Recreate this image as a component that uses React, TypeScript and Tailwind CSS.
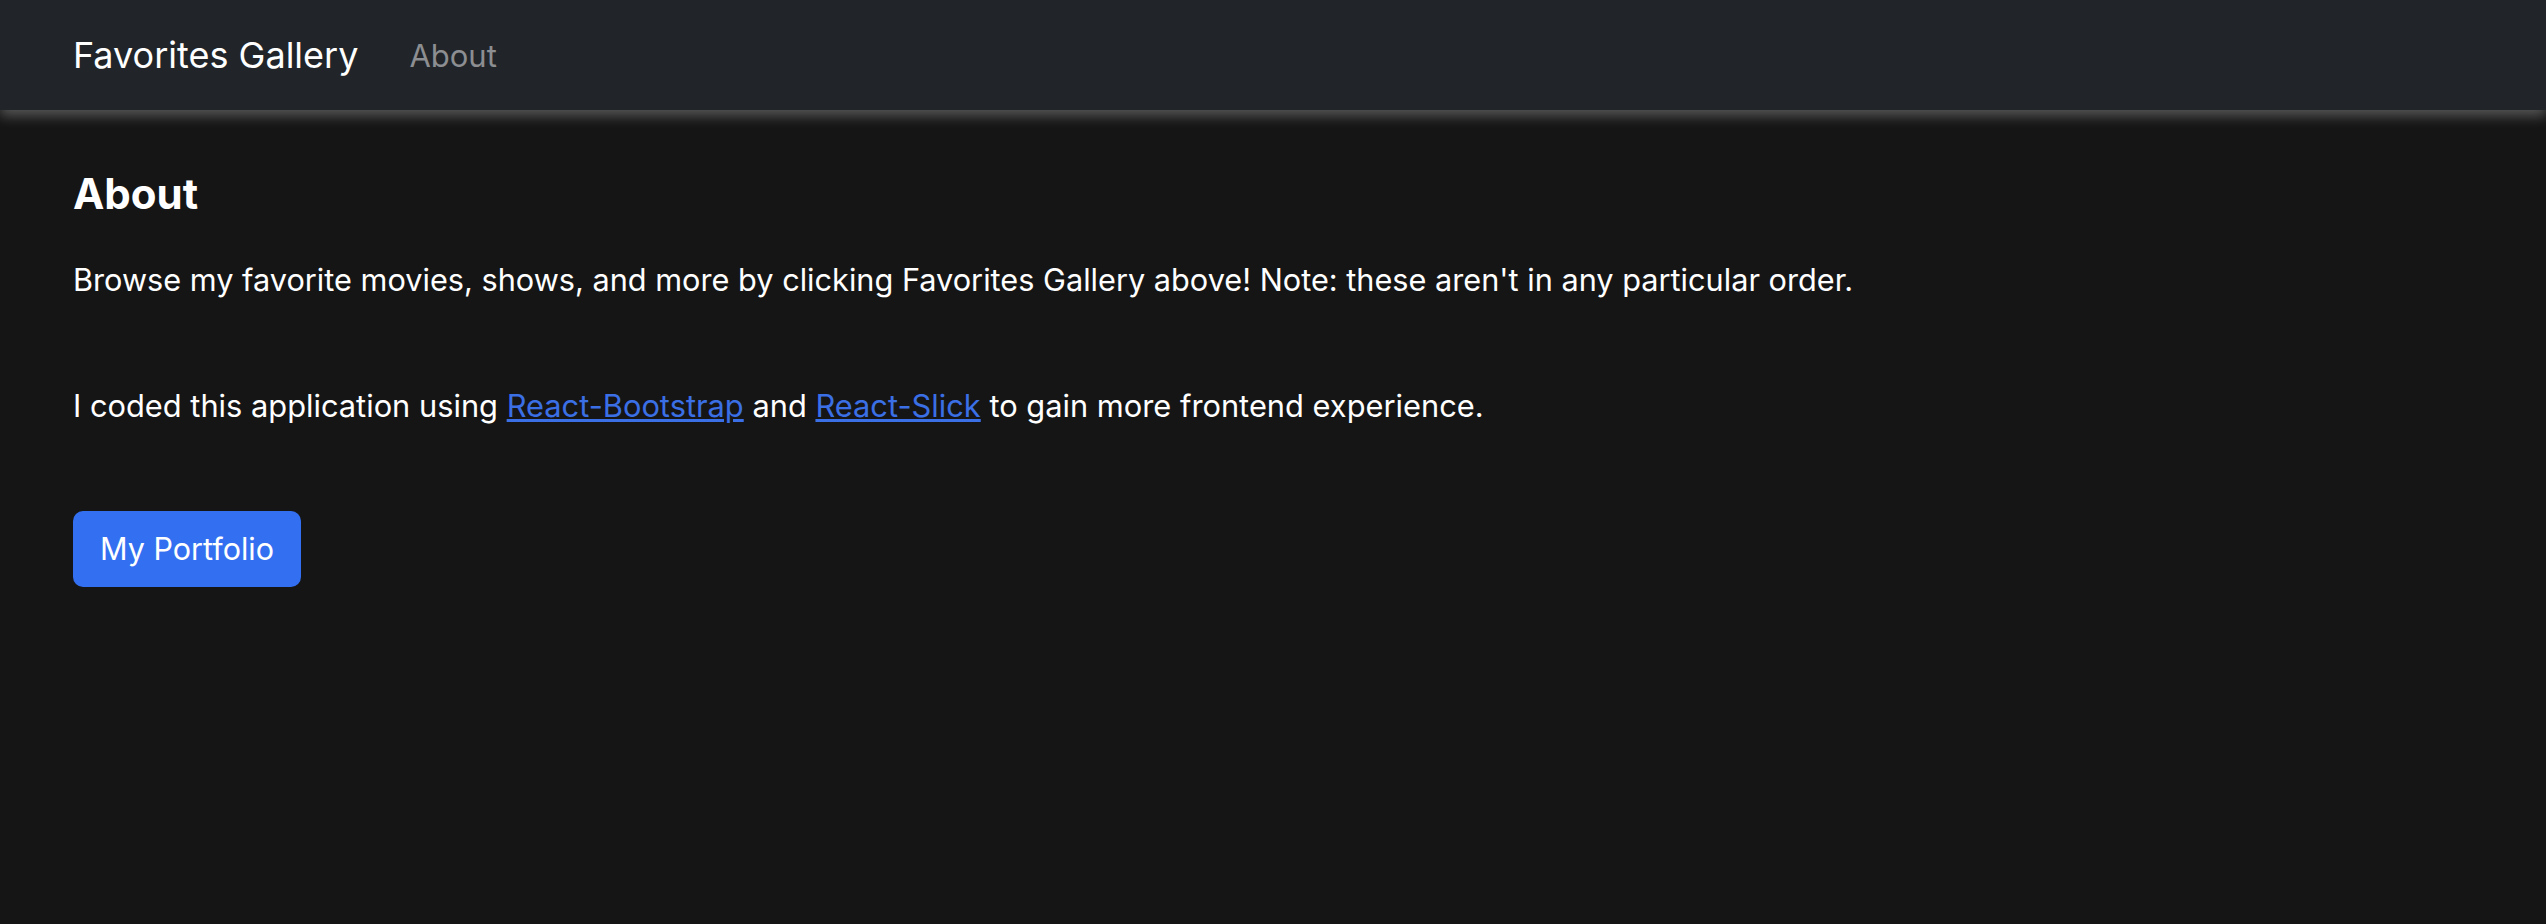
const font = "font-['Inter','Liberation_Sans',sans-serif]";

function NavBar() {
  return (
    <nav className="relative z-10 flex h-[110px] items-center gap-[51px] bg-[#212529] px-[73px] shadow-[0_6px_12px_rgba(255,255,255,0.28)]">
      <a href="#" className="text-[36px] leading-none text-white">
        Favorites Gallery
      </a>
      <a href="#" className="text-[31px] leading-none text-[#8c8e91]">
        About
      </a>
    </nav>
  );
}

export default function App() {
  return (
    <div className={`min-h-[924px] bg-[#151515] text-white ${font}`}>
      <NavBar />
      <main className="px-[73px]">
        <h4 className="mt-[59px] text-[42px] font-bold leading-[1.2]">About</h4>
        <p className="mt-[38px] text-[30.7px] leading-[1.5]">
          Browse my favorite movies, shows, and more by clicking Favorites Gallery above! Note: these aren't in any
          particular order.
        </p>
        <p className="mt-[80px] text-[30.8px] leading-[1.5]">
          I coded this application using{" "}
          <a href="#" className="text-[#3b6fe5] underline">
            React-Bootstrap
          </a>{" "}
          and{" "}
          <a href="#" className="text-[#3b6fe5] underline">
            React-Slick
          </a>{" "}
          to gain more frontend experience.
        </p>
        <button className="mt-[81px] flex h-[76px] w-[228px] items-center justify-center rounded-[10px] bg-[#3370f1] text-[30.5px] text-white">
          My Portfolio
        </button>
      </main>
    </div>
  );
}
